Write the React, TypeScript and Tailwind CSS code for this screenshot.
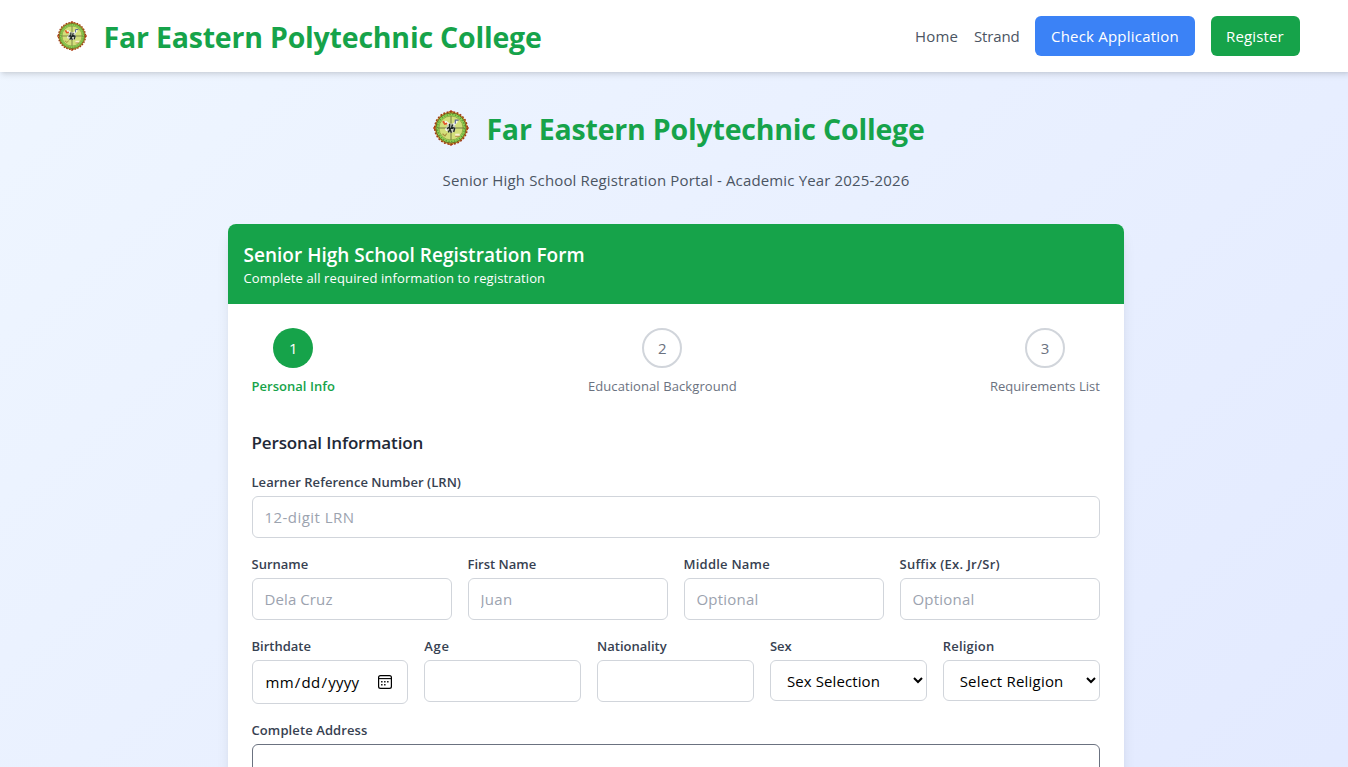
import type { ReactNode } from "react";

function Seal({ className }: { className: string }) {
  return (
    <svg viewBox="0 0 48 48" className={className} aria-hidden="true">
      <path d="M24 6l3 2.2h-6zM24 42l3-2.2h-6zM6 24l2.2-3v6zM42 24l-2.2-3v6z" fill="#b8431a" />
      <circle cx="24" cy="24" r="16.2" fill="#dba52e" />
      <circle cx="24" cy="24" r="16.2" fill="none" stroke="#9c3a1c" strokeWidth="1.6" strokeDasharray="1.8 1.6" />
      <circle cx="24" cy="24" r="15.1" fill="#96cf55" stroke="#6a5a1c" strokeWidth="0.9" />
      <circle cx="24" cy="24" r="13.5" fill="none" stroke="#55a238" strokeWidth="1.2" strokeDasharray="1.4 1.4" />
      <circle cx="24" cy="24" r="12" fill="#d3df7a" stroke="#7fa03a" strokeWidth="0.7" />
      <path d="M11 24h26M24 12v24" stroke="#66703a" strokeWidth="0.9" />
      <path d="M18 17.5l5.5 4M30 17l-4 4.5M18.5 26l4-2" stroke="#f7f8ee" strokeWidth="2.6" />
      <path d="M16 17.2l1.8 2.8 2.4-.6" fill="none" stroke="#e0562c" strokeWidth="1.8" />
      <path d="M28.3 19.8v-3.6h3.4" fill="none" stroke="#5b6796" strokeWidth="1.2" />
      <circle cx="24" cy="24.2" r="4.6" fill="#c9ccc0" />
      <path d="M22.6 19.8v3.4l-2.6 1.4M25.5 20.5l-.8 2.8 3 1-1 3.7M21.3 28.4l1.7-3.2 1.4 3.6M22 24.4h4" fill="none" stroke="#1f2823" strokeWidth="1.4" />
      <path d="M15.5 29.7l2.5 2.2 1.8-2.4" fill="none" stroke="#a88f3f" strokeWidth="1.2" />
      <path d="M28.2 30.8h4.4" stroke="#f7f1cf" strokeWidth="2.2" />
      <path d="M28.2 32.3h4.4" stroke="#b3763f" strokeWidth="0.8" />
    </svg>
  );
}

function CalendarIcon() {
  return (
    <svg viewBox="0 0 14 14" className="pointer-events-none absolute top-[15px] right-4 size-3.5" aria-hidden="true">
      <rect x="0.6" y="0.6" width="12.8" height="12.8" rx="1.9" fill="none" stroke="#000" strokeWidth="1.2" />
      <path d="M0.5 3.6h13" stroke="#000" strokeWidth="1.1" />
      <path d="M6 6h1.6v1.6H6zM9 6h1.6v1.6H9zM3 6h1.6v1.6H3zM3 9h1.6v1.6H3zM6 9h1.6v1.6H6z" fill="#222" />
    </svg>
  );
}

function Field({ label, tracking = "", children }: { label: string; tracking?: string; children: ReactNode }) {
  return (
    <div className="flex min-w-0 flex-col items-start">
      <label className={`mb-1 block h-5 whitespace-nowrap text-[13px]/5 font-semibold text-[#374151] ${tracking}`}>{label}</label>
      {children}
    </div>
  );
}

const control = "w-full rounded-md border border-[#d1d5db] bg-white text-[15px]/6 placeholder:text-[#9ca3af]";
const input = `${control} h-[42px] px-3 py-2`;

function Step({ n, label, active = false, tracking = "" }: { n: number; label: string; active?: boolean; tracking?: string }) {
  return (
    <div className="flex flex-col items-center">
      <div
        className={
          active
            ? "flex size-10 items-center justify-center rounded-full bg-[#16a34a] text-[15px] text-white"
            : "flex size-10 items-center justify-center rounded-full border-2 border-[#d1d5db] bg-white text-[15px] text-[#6b7280]"
        }
      >
        {n}
      </div>
      <span className={`mt-2 text-[13px]/5 ${active ? "font-semibold text-[#16a34a]" : "text-[#6b7280]"} ${tracking}`}>{label}</span>
    </div>
  );
}

export default function App() {
  return (
    <div className="h-screen overflow-hidden font-['Open_Sans',sans-serif]">
      <div className="h-[1240px] w-[1351px] bg-linear-to-br/srgb from-[#eff6ff] to-[#e0e7ff]">
        <header className="flex h-[72px] items-center justify-between bg-white pr-[51px] pl-[51.5px] shadow-md">
          <div className="flex items-center gap-3">
            <Seal className="size-10" />
            <span className="pt-0.5 text-[28.5px]/9 font-bold tracking-[-0.2px] whitespace-nowrap text-[#16a34a]">Far Eastern Polytechnic College</span>
          </div>
          <nav className="flex items-center gap-4 text-[15px]/6 whitespace-nowrap text-[#4b5563]">
            <a className="w-[43px] tracking-[0.15px]">Home</a>
            <a className="w-[45px] tracking-[-0.15px]">Strand</a>
            <a className="w-40 rounded-md bg-[#3b82f6] px-4 py-2 tracking-[0.21px] text-white">Check Application</a>
            <a className="w-[89px] rounded-md bg-[#16a34a] py-2 pl-[15px] tracking-[0.15px] text-white">Register</a>
          </nav>
        </header>

        <main className="mx-auto w-[896px] pt-8">
          <div className="flex flex-col items-center">
            <div className="flex h-12 items-center gap-[11px] pl-px">
              <Seal className="size-12" />
              <h1 className="pt-px text-[28.5px]/9 font-bold tracking-[-0.2px] whitespace-nowrap text-[#16a34a]">Far Eastern Polytechnic College</h1>
            </div>
            <p className="mt-4 pl-px text-[15px]/6 tracking-[0.15px] text-[#4b5563]">Senior High School Registration Portal - Academic Year 2025-2026</p>
          </div>

          <section className="mt-8 overflow-hidden rounded-lg bg-white shadow-lg">
            <div className="h-20 bg-[#16a34a] px-4 pt-[17px] text-white">
              <h2 className="text-[19px]/7 font-semibold tracking-[0.02px]">Senior High School Registration Form</h2>
              <p className="-mt-px text-[13px]/5 tracking-[0.12px]">Complete all required information to registration</p>
            </div>

            <div className="p-6">
              <div className="-mr-[0.5px] mb-[33px] flex justify-between">
                <Step n={1} label="Personal Info" active tracking="tracking-[0.03px]" />
                <Step n={2} label="Educational Background" tracking="tracking-[0.09px]" />
                <Step n={3} label="Requirements List" tracking="tracking-[0.03px]" />
              </div>

              <h3 className="mb-[15px] text-[17px]/7 font-semibold tracking-[-0.15px] text-[#1f2937]">Personal Information</h3>

              <form className="flex flex-col gap-4">
                <Field label="Learner Reference Number (LRN)" tracking="tracking-[0.04px]">
                  <input className={`${input} tracking-[0.45px]`} placeholder="12-digit LRN" />
                </Field>

                <div className="grid grid-cols-4 gap-4">
                  <Field label="Surname">
                    <input className={`${input} tracking-[0.1px]`} placeholder="Dela Cruz" />
                  </Field>
                  <Field label="First Name">
                    <input className={`${input} tracking-[0.3px]`} placeholder="Juan" />
                  </Field>
                  <Field label="Middle Name" tracking="tracking-[0.23px]">
                    <input className={`${input} tracking-[0.2px]`} placeholder="Optional" />
                  </Field>
                  <Field label="Suffix (Ex. Jr/Sr)" tracking="tracking-[0.25px]">
                    <input className={`${input} tracking-[0.2px]`} placeholder="Optional" />
                  </Field>
                </div>

                <div className="grid grid-cols-5 gap-4">
                  <Field label="Birthdate">
                    <div className="relative w-full">
                      <input
                        type="date"
                        className={`${control} block h-11 px-3 py-2 tracking-[0.25px] text-black [&::-webkit-calendar-picker-indicator]:opacity-0`}
                      />
                      <CalendarIcon />
                    </div>
                  </Field>
                  <Field label="Age" tracking="tracking-[0.7px]">
                    <input className={input} />
                  </Field>
                  <Field label="Nationality">
                    <input className={input} />
                  </Field>
                  <Field label="Sex">
                    <select className={`${control} h-[41px] px-3 py-2 tracking-[0.1px] text-black`}>
                      <option>Sex Selection</option>
                    </select>
                  </Field>
                  <Field label="Religion" tracking="tracking-[0.2px]">
                    <select className={`${control} h-[41px] px-3 py-2 tracking-[0.21px] text-black`}>
                      <option>Select Religion</option>
                    </select>
                  </Field>
                </div>

                <Field label="Complete Address" tracking="tracking-[0.1px]">
                  <textarea className="h-20 w-full resize-none rounded-md border border-[#6b7280] bg-white px-3 py-2" />
                </Field>
              </form>
            </div>
          </section>
        </main>
      </div>
    </div>
  );
}
